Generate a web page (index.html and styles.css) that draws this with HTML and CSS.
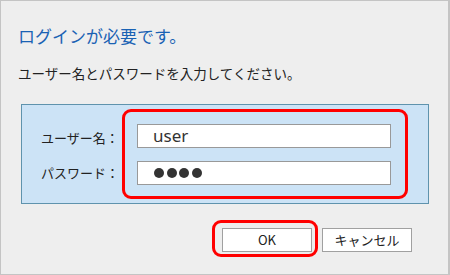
FILE: index.html
```html
<!DOCTYPE html>
<html lang="ja">
<head>
<meta charset="utf-8">
<link rel="stylesheet" href="styles.css">
</head>
<body>
<div class="dialog">
  <h1 class="title">ログインが必要です。</h1>
  <p class="subtitle">ユーザー名とパスワードを入力してください。</p>
  <div class="panel">
    <div class="labels">
      <div class="label">ユーザー名：</div>
      <div class="label">パスワード：</div>
    </div>
    <div class="highlight fields">
      <div class="input"><span class="value">user</span></div>
      <div class="input"><span class="dots"><i></i><i></i><i></i><i></i></span></div>
    </div>
  </div>
  <div class="buttons">
    <div class="highlight okwrap"><div class="btn">OK</div></div>
    <div class="btn">キャンセル</div>
  </div>
</div>
</body>
</html>
```
FILE: styles.css
```css
html, body {
  margin: 0;
  padding: 0;
}
body {
  font-family: "Noto Sans CJK JP", "Noto Sans", sans-serif;
  color: #222;
}
.dialog {
  box-sizing: border-box;
  width: 450px;
  height: 275px;
  border: 1px solid #c4c4c4;
  border-right-width: 2px;
  background: #eeeeee;
  padding: 25px 0 0 17px;
}
.title {
  margin: 0;
  font-size: 17px;
  font-weight: normal;
  line-height: 20px;
  color: #1a62b4;
}
.subtitle {
  margin: 18px 0 0;
  font-size: 13.5px;
  line-height: 18px;
  color: #222;
}
.panel {
  box-sizing: border-box;
  margin: 22px 0 0 3px;
  width: 408px;
  height: 100px;
  border: 1px solid #5f93ad;
  background: #cce3f6;
  display: flex;
  padding: 4px 0 0 0;
}
.labels {
  width: 100px;
  padding: 15px 0 0 19px;
  box-sizing: border-box;
  display: flex;
  flex-direction: column;
  gap: 13px;
}
.label {
  height: 24px;
  line-height: 24px;
  font-size: 13px;
  color: #222;
}
.label:first-child {
  line-height: 27px;
}
.highlight {
  border: 3px solid #ff0000;
  border-radius: 9px;
  box-sizing: border-box;
}
.fields {
  width: 286px;
  height: 90px;
  padding: 12px 14px 11px 12px;
  display: flex;
  flex-direction: column;
  gap: 13px;
}
.input {
  box-sizing: border-box;
  width: 254px;
  height: 24px;
  border: 1px solid #999999;
  background: #ffffff;
  padding-left: 15px;
  display: flex;
  align-items: center;
}
.value {
  font-family: "Noto Sans", sans-serif;
  font-size: 17px;
  color: #333;
  line-height: 22px;
}
.dots {
  display: flex;
  gap: 2.5px;
  padding-left: 1px;
}
.dots i {
  display: block;
  width: 10px;
  height: 10px;
  border-radius: 50%;
  background: #333;
}
.buttons {
  display: flex;
  justify-content: flex-end;
  align-items: flex-start;
  gap: 4px;
  margin-top: 16px;
  padding-right: 36px;
}
.okwrap {
  padding: 5px 3px 2px 7px;
}
.btn {
  box-sizing: border-box;
  width: 90px;
  height: 24px;
  border: 1px solid #a0a0a0;
  background: #ffffff;
  font-size: 13px;
  line-height: 22px;
  text-align: center;
  color: #222;
}
.buttons > .btn {
  margin-top: 8px;
}
```
